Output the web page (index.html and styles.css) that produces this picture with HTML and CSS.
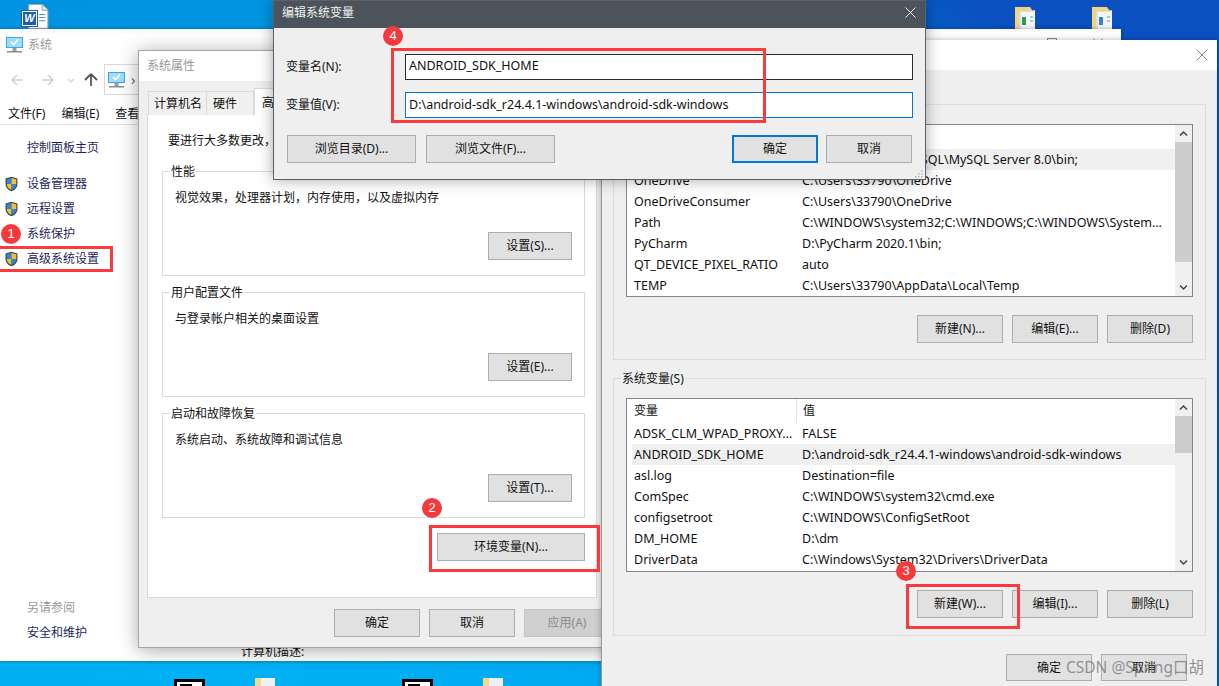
FILE: index.html
```html
<!DOCTYPE html>
<html lang="zh-CN">
<head>
<meta charset="utf-8">
<title>系统</title>
<link rel="stylesheet" href="styles.css">
</head>
<body>
<svg class="defs" width="0" height="0" aria-hidden="true">
  <symbol id="shield" viewBox="0 0 14 17">
    <path d="M7 .6 13.4 2.6V8.5C13.4 12.4 10.6 15 7 16.4 3.4 15 .6 12.4.6 8.5V2.6Z" fill="#3b4a57"/>
    <path d="M7 2 7 8.4H1.9V3.5Z" fill="#2f86d6"/>
    <path d="M7 2 12.1 3.5V8.4H7Z" fill="#f6bd2e"/>
    <path d="M1.9 8.4H7V14.8C4.2 13.6 1.9 11.6 1.9 8.4Z" fill="#f6bd2e"/>
    <path d="M12.1 8.4H7V14.8C9.8 13.6 12.1 11.6 12.1 8.4Z" fill="#2f86d6"/>
  </symbol>
  <symbol id="monitor" viewBox="0 0 17 16">
    <rect x="0" y="0" width="17" height="11" fill="#3ea6e6"/>
    <rect x="1" y="1" width="15" height="9" fill="#9fdcfa"/>
    <path d="M5 5 7.5 7.5 12 2.5" fill="none" stroke="#fff" stroke-width="1.6"/>
    <rect x="6.5" y="11" width="4" height="3" fill="#9a9a9a"/>
    <rect x="1" y="14" width="15" height="1.5" fill="#8b8b8b"/>
  </symbol>
  <symbol id="up" viewBox="0 0 9 7"><path d="M1 5.5 4.5 2 8 5.5" fill="none" stroke="#444" stroke-width="1.5"/></symbol>
  <symbol id="down" viewBox="0 0 9 7"><path d="M1 1.5 4.5 5 8 1.5" fill="none" stroke="#444" stroke-width="1.5"/></symbol>
  <symbol id="close" viewBox="0 0 12 12"><path d="M.5.5 11.5 11.5M11.5.5.5 11.5" fill="none" stroke="currentColor" stroke-width="1"/></symbol>
  <symbol id="folderdoc" viewBox="0 0 20 22">
    <path d="M0 0H15L17 3V22H0Z" fill="#f3d47e"/>
    <path d="M4 4H14L20 3V22H4Z" fill="#d9dfe3"/>
    <path d="M6 5H16L20 4V22H6Z" fill="#f4f6f7"/>
    <path d="M15 9h3v2h-3zM15 13h3v2h-3z" fill="#a9c6dc"/>
  </symbol>
</svg>

<main class="desktop">
  <div class="word-icon">
    <svg class="word-page" viewBox="0 0 20 24"><path d="M1 .5H14L19.5 6V23.5H1Z" fill="#fff" stroke="#9aa5ad"/><path d="M14 .5V6H19.5" fill="#e6e6e6" stroke="#9aa5ad"/><path d="M11 10H17M11 13H17M11 16H17" stroke="#5a8ac6"/></svg>
    <span class="word-badge">W</span>
  </div>
  <div class="thumb thumb-a"><svg class="thumb-svg"><use href="#folderdoc"/></svg><i class="thumb-mark mark-green"></i></div>
  <div class="thumb thumb-b"><svg class="thumb-svg"><use href="#folderdoc"/></svg><i class="thumb-mark mark-blue"></i></div>
  <div class="black-icon black-a"></div>
  <div class="black-icon black-b"></div>
  <div class="file-icon file-a"></div>
  <div class="file-icon file-b"></div>

  <section class="win sys">
    <header class="sys-title">
      <svg class="ico-mon"><use href="#monitor"/></svg><span>系统</span>
      <div class="sys-controls"><i class="ctl-box"></i><svg class="ctl-x"><use href="#close"/></svg></div>
    </header>
    <nav class="sys-nav">
      <svg class="nav-svg" viewBox="0 0 104 20">
        <path d="M12 10H23M12 10 17 5M12 10 17 15" fill="none" stroke="#d0d0d0" stroke-width="1.5"/>
        <path d="M53 10H42M53 10 48 5M53 10 48 15" fill="none" stroke="#d0d0d0" stroke-width="1.5"/>
        <path d="M68 9 71 12 74 9" fill="none" stroke="#d0d0d0" stroke-width="1.2"/>
        <path d="M91 16V4M91 4 85 10M91 4 97 10" fill="none" stroke="#555" stroke-width="1.8"/>
      </svg>
      <div class="address"><svg class="ico-mon"><use href="#monitor"/></svg><span class="crumb">›</span></div>
    </nav>
    <div class="menu"><span>文件(F)</span><span>编辑(E)</span><span>查看(V)</span></div>
    <div class="sys-body">
      <aside class="side">
        <div class="side-home">控制面板主页</div>
        <div class="side-item"><svg class="ico-shield"><use href="#shield"/></svg>设备管理器</div>
        <div class="side-item"><svg class="ico-shield"><use href="#shield"/></svg>远程设置</div>
        <div class="side-item"><svg class="ico-shield"><use href="#shield"/></svg>系统保护</div>
        <div class="side-item"><svg class="ico-shield"><use href="#shield"/></svg>高级系统设置</div>
        <div class="side-also">另请参阅</div>
        <div class="side-link">安全和维护</div>
      </aside>
      <div class="sys-main"><span class="desc-label">计算机描述:</span></div>
    </div>
  </section>

  <section class="win props">
    <header class="win-title"><span>系统属性</span></header>
    <div class="props-body">
      <div class="tabs">
        <span class="tab tab-name">计算机名</span>
        <span class="tab tab-hw">硬件</span>
        <span class="tab tab-on">高级</span>
      </div>
      <div class="pane">
        <p class="intro">要进行大多数更改，你必须作为管理员登录。</p>
        <div class="group">
          <div class="legend">性能</div>
          <p class="group-desc">视觉效果，处理器计划，内存使用，以及虚拟内存</p>
          <button class="btn btn-set">设置(S)...</button>
        </div>
        <div class="group">
          <div class="legend">用户配置文件</div>
          <p class="group-desc">与登录帐户相关的桌面设置</p>
          <button class="btn btn-set">设置(E)...</button>
        </div>
        <div class="group">
          <div class="legend">启动和故障恢复</div>
          <p class="group-desc">系统启动、系统故障和调试信息</p>
          <button class="btn btn-set">设置(T)...</button>
        </div>
        <button class="btn btn-env">环境变量(N)...</button>
      </div>
      <div class="props-foot">
        <button class="btn btn-w">确定</button>
        <button class="btn btn-w">取消</button>
        <button class="btn btn-w btn-off">应用(A)</button>
      </div>
    </div>
  </section>

  <section class="win env">
    <header class="win-title env-title"><span>环境变量</span><svg class="env-x"><use href="#close"/></svg></header>
    <div class="env-body">
      <div class="var-group user-group">
        <div class="legend">用户变量(U)</div>
        <div class="list">
          <div class="list-rows">
            <div class="row head"><span class="c1">变量</span><span class="c2">值</span></div>
            <div class="row sel"><span class="c1">MySQL</span><span class="c2">C:\Program Files\MySQL\MySQL Server 8.0\bin;</span></div>
            <div class="row"><span class="c1">OneDrive</span><span class="c2">C:\Users\33790\OneDrive</span></div>
            <div class="row"><span class="c1">OneDriveConsumer</span><span class="c2">C:\Users\33790\OneDrive</span></div>
            <div class="row"><span class="c1">Path</span><span class="c2">C:\WINDOWS\system32;C:\WINDOWS;C:\WINDOWS\System...</span></div>
            <div class="row"><span class="c1">PyCharm</span><span class="c2">D:\PyCharm 2020.1\bin;</span></div>
            <div class="row"><span class="c1">QT_DEVICE_PIXEL_RATIO</span><span class="c2">auto</span></div>
            <div class="row"><span class="c1">TEMP</span><span class="c2">C:\Users\33790\AppData\Local\Temp</span></div>
          </div>
          <div class="scroll">
            <svg class="arrow"><use href="#up"/></svg>
            <div class="scroll-track"><i class="scroll-thumb thumb-long"></i></div>
            <svg class="arrow"><use href="#down"/></svg>
          </div>
        </div>
        <div class="list-btns">
          <button class="btn btn-w">新建(N)...</button>
          <button class="btn btn-w">编辑(E)...</button>
          <button class="btn btn-w">删除(D)</button>
        </div>
      </div>
      <div class="var-group sys-group">
        <div class="legend">系统变量(S)</div>
        <div class="list">
          <div class="list-rows">
            <div class="row head"><span class="c1">变量</span><span class="c2">值</span></div>
            <div class="row"><span class="c1">ADSK_CLM_WPAD_PROXY...</span><span class="c2">FALSE</span></div>
            <div class="row sel"><span class="c1">ANDROID_SDK_HOME</span><span class="c2">D:\android-sdk_r24.4.1-windows\android-sdk-windows</span></div>
            <div class="row"><span class="c1">asl.log</span><span class="c2">Destination=file</span></div>
            <div class="row"><span class="c1">ComSpec</span><span class="c2">C:\WINDOWS\system32\cmd.exe</span></div>
            <div class="row"><span class="c1">configsetroot</span><span class="c2">C:\WINDOWS\ConfigSetRoot</span></div>
            <div class="row"><span class="c1">DM_HOME</span><span class="c2">D:\dm</span></div>
            <div class="row"><span class="c1">DriverData</span><span class="c2">C:\Windows\System32\Drivers\DriverData</span></div>
          </div>
          <div class="scroll">
            <svg class="arrow"><use href="#up"/></svg>
            <div class="scroll-track"><i class="scroll-thumb thumb-short"></i></div>
            <svg class="arrow"><use href="#down"/></svg>
          </div>
        </div>
        <div class="list-btns">
          <button class="btn btn-w">新建(W)...</button>
          <button class="btn btn-w">编辑(I)...</button>
          <button class="btn btn-w">删除(L)</button>
        </div>
      </div>
      <div class="env-foot">
        <button class="btn btn-w">确定</button>
        <button class="btn btn-w">取消</button>
      </div>
    </div>
  </section>

  <section class="win edit">
    <header class="edit-title"><span>编辑系统变量</span><svg class="edit-x"><use href="#close"/></svg></header>
    <div class="edit-body">
      <div class="field-row"><label class="field-label">变量名(N):</label><div class="field field-name">ANDROID_SDK_HOME</div></div>
      <div class="field-row"><label class="field-label">变量值(V):</label><div class="field field-focus">D:\android-sdk_r24.4.1-windows\android-sdk-windows</div></div>
      <div class="edit-btns">
        <button class="btn btn-browse">浏览目录(D)...</button>
        <button class="btn btn-browse">浏览文件(F)...</button>
        <span class="edit-spacer"></span>
        <button class="btn btn-w btn-default">确定</button>
        <button class="btn btn-w">取消</button>
      </div>
      <svg class="grip" viewBox="0 0 9 9"><path d="M7 1h1.5v1.5H7zM4 4h1.5v1.5H4zM7 4h1.5v1.5H7zM1 7h1.5v1.5H1zM4 7h1.5v1.5H4zM7 7h1.5v1.5H7z" fill="#b8b8b8"/></svg>
    </div>
  </section>

  <div class="mark mark-1"></div>
  <div class="mark mark-2"></div>
  <div class="mark mark-3"></div>
  <div class="mark mark-4"></div>
  <span class="badge badge-1">1</span>
  <span class="badge badge-2">2</span>
  <span class="badge badge-3">3</span>
  <span class="badge badge-4">4</span>
  <span class="watermark">CSDN @Spring口胡</span>
</main>
</body>
</html>
```
FILE: styles.css
```css
* { box-sizing: border-box; }
html, body { margin: 0; padding: 0; }
body { font: 12px/16px "Noto Sans", "Noto Sans CJK SC", sans-serif; color: #111; background: #0a50c0; }
p { margin: 0; }
.defs { position: absolute; }

.desktop {
  position: relative; width: 1219px; height: 686px; overflow: hidden;
  background: radial-gradient(circle at 200px 750px, #00b2f4 0, #00aaf0 400px, #0092e0 780px, #0a50c0 1080px);
}

/* desktop icons */
.word-icon { position: absolute; left: 22px; top: 4px; width: 27px; height: 25px; }
.word-page { position: absolute; left: 5px; top: 0; width: 22px; height: 25px; }
.word-badge { position: absolute; left: 0; top: 7px; width: 15px; height: 15px; background: #1f5cb0; border: 1px solid #fff; outline: 1px solid #1f5cb0; color: #fff; font: italic bold 11px/13px "Liberation Sans", sans-serif; text-align: center; }
.thumb { position: absolute; top: 7px; width: 20px; height: 22px; }
.thumb-a { left: 1015px; }
.thumb-b { left: 1092px; }
.thumb-svg { width: 20px; height: 22px; display: block; }
.thumb-mark { position: absolute; left: 7px; top: 10px; width: 4px; height: 8px; }
.mark-green { background: #2f9a55; }
.mark-blue { background: #3a7fd0; }
.black-icon { position: absolute; top: 679px; width: 31px; height: 10px; background: #fff; border: 3px solid #000; }
.black-icon::after { content: ""; display: block; width: 12px; height: 2px; background: #000; margin: 2px 0 0 3px; }
.black-a { left: 174px; }
.black-b { left: 402px; }
.file-icon { position: absolute; top: 678px; width: 20px; height: 10px; background: linear-gradient(90deg, #f4d98a 0 6px, #eef0f2 6px); }
.file-a { left: 255px; }
.file-b { left: 483px; }

/* windows */
.win { position: absolute; background: #fff; }
.sys { z-index: 1; left: 0; top: 29px; width: 1121px; height: 632px; display: flex; flex-direction: column; box-shadow: 0 0 4px rgba(0,0,0,.35); }
.sys-title { height: 30px; flex: none; display: flex; align-items: center; padding: 2px 0 0 6px; gap: 5px; color: #999; background: linear-gradient(#f6f6f6, #fff 6px); }
.ico-mon { width: 17px; height: 16px; flex: none; }
.sys-controls { margin-left: auto; display: flex; align-items: center; gap: 36px; padding: 0 18px 0 0; align-self: flex-start; margin-top: 7px; }
.ctl-box { width: 10px; height: 10px; border: 1px solid #888; display: block; }
.ctl-x { width: 10px; height: 10px; color: #888; }
.sys-nav { height: 36px; flex: none; display: flex; align-items: flex-end; }
.nav-svg { width: 104px; height: 20px; flex: none; margin-bottom: 5px; }
.address { width: 600px; height: 31px; border: 1px solid #d9d9d9; display: flex; align-items: center; padding-left: 3px; gap: 6px; }
.crumb { color: #666; font-size: 14px; }
.menu { height: 30px; flex: none; display: flex; align-items: center; gap: 16px; padding: 8px 0 0 8px; border-bottom: 1px solid #e2e2e2; }
.sys-body { flex: 1; display: flex; min-height: 0; }
.side { width: 138px; flex: none; display: flex; flex-direction: column; padding: 15px 0 16px; color: #1f1f5e; }
.side-home { padding-left: 27px; margin-bottom: 15px; }
.side-item { height: 25px; display: flex; align-items: center; padding-left: 5px; gap: 9px; }
.ico-shield { width: 13px; height: 16px; flex: none; }
.side-also { margin-top: auto; padding-left: 27px; height: 25px; line-height: 25px; color: #999; }
.side-link { padding-left: 27px; height: 25px; line-height: 25px; }
.sys-main { flex: 1; display: flex; flex-direction: column; justify-content: flex-end; padding: 0 0 1px 103px; }
.desc-label { line-height: 16px; }

.win-title { height: 30px; display: flex; align-items: center; padding-left: 8px; color: #999; flex: none; }

/* system properties */
.props { z-index: 2; left: 138px; top: 50px; width: 478px; height: 598px; border: 1px solid #a6a6a6; box-shadow: 0 2px 18px rgba(0,0,0,.35); display: flex; flex-direction: column; }
.props-body { flex: 1; background: #efefef; padding: 9px 0 0 8px; display: flex; flex-direction: column; }
.tabs { display: flex; align-items: flex-end; height: 25px; margin-left: 1px; position: relative; z-index: 1; margin-bottom: -1px; }
.tab { height: 24px; line-height: 23px; padding: 0 5px; border: 1px solid #d9d9d9; border-bottom: 0; background: #f0f0f0; white-space: nowrap; }
.tab-name { width: 59px; }
.tab-hw { width: 47px; border-left: 0; padding-left: 6px; }
.tab-on { width: 50px; height: 27px; background: #fff; border-left: 1px solid #d9d9d9; padding-left: 7px; line-height: 27px; }
.pane { width: 450px; height: 484px; background: #fff; border: 1px solid #d9d9d9; padding: 18px 0 0 14px; display: flex; flex-direction: column; align-items: flex-start; }
.intro { margin: 0 0 22px 6px; white-space: nowrap; }
.group { width: 423px; height: 105px; border: 1px solid #d9d9d9; margin-bottom: 16px; display: flex; flex-direction: column; padding: 0 12px 15px 12px; }
.legend { margin: -8px 0 0 -5px; padding: 0 1px; background: #fff; width: fit-content; line-height: 16px; white-space: nowrap; }
.group-desc { margin-top: 10px; white-space: nowrap; }
.btn { font: inherit; line-height: 1; color: #111; background: #e1e1e1; border: 1px solid #adadad; padding: 0; margin: 0; border-radius: 0; }
.btn-set { width: 84px; height: 28px; margin-top: auto; align-self: flex-end; }
.btn-env { width: 148px; height: 28px; margin: -1px 0 0 275px; }
.props-foot { display: flex; gap: 9px; padding: 11px 0 0 187px; }
.btn-w { width: 86px; height: 28px; flex: none; }
.btn-off { color: #8b8b8b; background: #cfcfcf; border-color: #c4c4c4; }

/* environment variables */
.env { z-index: 3; left: 601px; top: 40px; width: 616px; height: 660px; border-left: 1px solid #9a9a9a; box-shadow: 0 0 6px rgba(0,0,0,.3); display: flex; flex-direction: column; }
.env-title { justify-content: space-between; color: #fff; padding-right: 9px; }
.env-x { width: 12px; height: 12px; color: #888; }
.env-body { flex: 1; background: #efefef; padding: 34px 0 0 11px; display: flex; flex-direction: column; }
.var-group { width: 593px; border: 1px solid #dcdcdc; padding: 0 12px; }
.var-group .legend { background: #efefef; margin-left: -5px; }
.user-group { height: 256px; }
.user-group .list { margin-top: 11px; height: 173px; }
.sys-group { height: 258px; margin-top: 18px; }
.sys-group .list { margin-top: 11px; height: 174px; }
.sys-group .list-btns { margin-top: 18px; }
.list { display: flex; border: 1px solid #82878f; background: #fff; width: 567px; }
.list-rows { flex: 1; min-width: 0; }
.row { height: 21px; margin-left: 5px; display: flex; align-items: center; white-space: nowrap; font-size: 12.5px; }
.row.sel { background: #f0f0f0; }
.row.head { height: 24px; position: relative; font-size: 12px; }
.c1 { width: 164px; padding-left: 2px; flex: none; }
.c2 { padding-left: 6px; }
.head .c2 { border-left: 1px solid #e5e5e5; height: 24px; line-height: 24px; }
.scroll { width: 17px; flex: none; background: #f0f0f0; display: flex; flex-direction: column; }
.arrow { width: 17px; height: 17px; flex: none; padding: 5px 4px; display: block; }
.scroll-track { flex: 1; }
.scroll-thumb { display: block; background: #cdcdcd; }
.thumb-long { height: 120px; }
.thumb-short { height: 37px; }
.list-btns { display: flex; justify-content: flex-end; gap: 9px; margin-top: 18px; }
.env-foot { display: flex; gap: 9px; padding: 18px 0 0 393px; }
.env-foot .btn-w { height: 27px; }

/* edit dialog */
.edit { z-index: 4; left: 273px; top: 0; width: 653px; height: 180px; border: 1px solid #5b6167; box-shadow: 0 0 14px rgba(0,0,0,.35); background: #efefef; display: flex; flex-direction: column; }
.edit-title { height: 27px; flex: none; background: #4c535a; color: #f2f2f2; display: flex; align-items: center; justify-content: space-between; padding: 0 9px 4px 8px; }
.edit-x { width: 11px; height: 11px; color: #fff; }
.edit-body { flex: 1; position: relative; padding: 26px 12px 0 12px; }
.field-row { display: flex; align-items: center; margin-bottom: 12px; }
.field-label { width: 119px; flex: none; }
.field { width: 508px; height: 26px; border: 1px solid #2b2b2b; background: #fff; line-height: 24px; padding-left: 3px; white-space: nowrap; font-size: 12.5px; }
.field-name { line-height: 22px; }
.field-focus { border-color: #0078d7; }
.edit-btns { display: flex; gap: 10px; margin: 17px 1px 0 1px; }
.btn-browse { width: 129px; height: 28px; }
.edit-spacer { flex: 1; }
.edit-btns .btn-w { margin-left: -2px; }
.btn-default { border: 2px solid #0078d7; }
.grip { position: absolute; right: 2px; bottom: 1px; width: 9px; height: 9px; }

/* annotations */
.mark { position: absolute; z-index: 5; border: 3px solid #fb3a3e; }
.mark-1 { left: -3px; top: 246px; width: 116px; height: 26px; }
.mark-2 { left: 429px; top: 525px; width: 171px; height: 47px; }
.mark-3 { left: 906px; top: 584px; width: 114px; height: 45px; }
.mark-4 { left: 391px; top: 48px; width: 375px; height: 75px; }
.badge { position: absolute; z-index: 5; width: 20px; height: 20px; border-radius: 50%; background: #f53a3e; color: #fff; font: 13px/20px "Liberation Sans", sans-serif; text-align: center; }
.badge-1 { left: 1px; top: 224px; }
.badge-2 { left: 422px; top: 498px; }
.badge-3 { left: 896px; top: 561px; }
.badge-4 { left: 383px; top: 26px; }
.watermark { position: absolute; z-index: 6; left: 1066px; top: 656px; font: 15.5px/22px "Noto Sans", "Noto Sans CJK SC", sans-serif; color: rgba(110,110,110,.72); white-space: nowrap; }
```
